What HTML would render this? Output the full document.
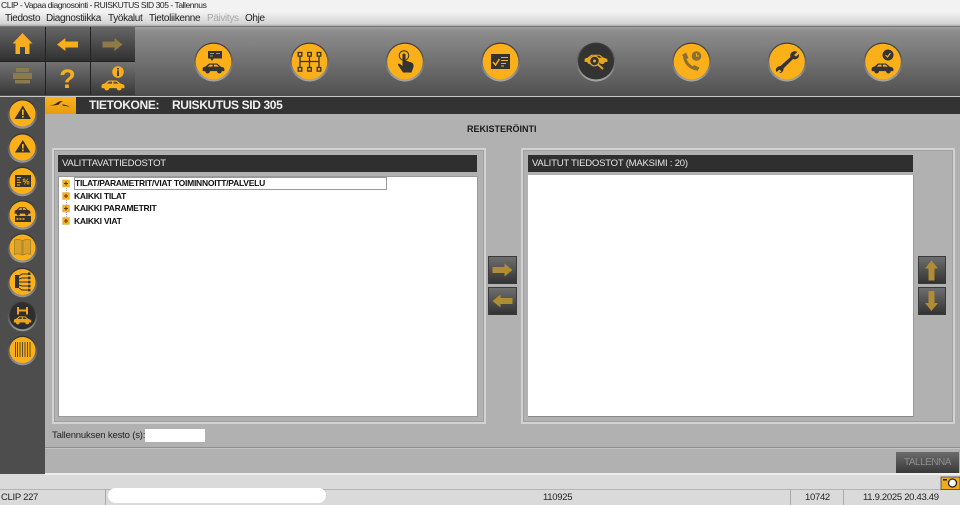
<!DOCTYPE html>
<html><head><meta charset="utf-8"><title>CLIP</title>
<style>
html,body{margin:0;padding:0;width:960px;height:505px;overflow:hidden;background:#dadada}
body{position:relative;font-family:"Liberation Sans",sans-serif}
div{position:absolute;box-sizing:border-box}
.t{white-space:nowrap;line-height:1}
.menu span{position:absolute;top:0;white-space:nowrap}
.btn{background:linear-gradient(#6e6e6e,#333);border:1px solid #3a3a3a}
.hd{background:#2f2f2f;color:#e8e8e8;font-size:9.5px;letter-spacing:-.2px;line-height:17px;padding-left:4px;white-space:nowrap}
.pn{border:2px solid #d2d2d2;outline:1px solid #a0a0a0;outline-offset:-3px}
.it{left:74px;font-size:8.5px;letter-spacing:-.25px;font-weight:bold;color:#111;white-space:nowrap;line-height:10px}
.st{top:492px;font-size:9.5px;letter-spacing:-.3px;color:#222;line-height:11px;white-space:nowrap}
</style></head><body>
<div style="left:0;top:0;width:960px;height:11px;background:#f2f2f2"></div>
<div class="t" style="left:1px;top:0;font-size:8.5px;letter-spacing:-.45px;color:#222;line-height:10px">CLIP - Vapaa diagnosointi - RUISKUTUS SID 305 - Tallennus</div>
<div style="left:0;top:11px;width:960px;height:15px;background:linear-gradient(#f4f4f4,#d4d4d4 85%,#a8a8a8)"></div>
<div class="menu" style="left:0;top:13px;width:960px;height:12px;font-size:10px;letter-spacing:-.35px;line-height:12px;color:#222">
<span style="left:5px">Tiedosto</span><span style="left:46px">Diagnostiikka</span><span style="left:108px">Työkalut</span><span style="left:149px">Tietoliikenne</span><span style="left:207px;color:#aaa">Päivitys</span><span style="left:245px">Ohje</span></div>
<div style="left:0;top:26px;width:960px;height:70px;background:linear-gradient(#a0a0a0 0,#8e8e8e 5%,#505050 100%);border-top:1px solid #777"></div>
<div style="left:0;top:27px;width:135px;height:34px;background:linear-gradient(#666,#303030)"></div>
<div style="left:0;top:62px;width:135px;height:33px;background:linear-gradient(#727272,#383838)"></div>
<div style="left:0;top:61px;width:135px;height:1px;background:#222"></div>
<div style="left:45px;top:27px;width:1px;height:68px;background:#222"></div>
<div style="left:90px;top:27px;width:1px;height:68px;background:#222"></div>
<div style="left:0;top:96px;width:960px;height:1px;background:#c8c8c8"></div>
<div style="left:0;top:97px;width:45px;height:377px;background:#4d4d4d"></div>
<div style="left:45px;top:97px;width:915px;height:17px;background:#333"></div>
<div style="left:45px;top:97px;width:31px;height:17px;background:linear-gradient(#f8b41c,#e89c10)"></div>
<div class="t" style="left:89px;top:98px;font-size:12px;letter-spacing:-.37px;font-weight:bold;color:#f0f0f0;line-height:14px">TIETOKONE:</div>
<div class="t" style="left:172px;top:98px;font-size:12px;letter-spacing:-.37px;font-weight:bold;color:#f0f0f0;line-height:14px">RUISKUTUS SID 305</div>
<div style="left:45px;top:114px;width:915px;height:360px;background:#b1b1b1"></div>
<div class="t" style="left:467px;top:124px;font-size:9px;font-weight:bold;color:#1a1a1a;line-height:10px">REKISTERÖINTI</div>
<div class="pn" style="left:52px;top:148px;width:434px;height:276px"></div>
<div class="pn" style="left:521px;top:148px;width:434px;height:276px"></div>
<div class="hd" style="left:58px;top:155px;width:419px;height:17px">VALITTAVATTIEDOSTOT</div>
<div class="hd" style="left:528px;top:155px;width:385px;height:17px">VALITUT TIEDOSTOT (MAKSIMI : 20)</div>
<div style="left:58px;top:176px;width:420px;height:241px;background:#fff;border:1px solid #999"></div>
<div style="left:528px;top:175px;width:386px;height:242px;background:#fff;border-bottom:1px solid #888;border-right:1px solid #999"></div>
<div style="left:74px;top:177px;width:313px;height:13px;border:1px solid #999"></div>
<div class="it" style="top:178px;left:75px">TILAT/PARAMETRIT/VIAT TOIMINNOITT/PALVELU</div>
<div class="it" style="top:191px">KAIKKI TILAT</div>
<div class="it" style="top:203px">KAIKKI PARAMETRIT</div>
<div class="it" style="top:216px">KAIKKI VIAT</div>
<div class="btn" style="left:488px;top:256px;width:29px;height:28px"></div>
<div class="btn" style="left:488px;top:287px;width:29px;height:28px"></div>
<div class="btn" style="left:918px;top:256px;width:28px;height:28px"></div>
<div class="btn" style="left:918px;top:287px;width:28px;height:28px"></div>
<div class="t" style="left:52px;top:430px;font-size:9.5px;letter-spacing:-.17px;color:#222;line-height:11px">Tallennuksen kesto (s):</div>
<div style="left:145px;top:429px;width:60px;height:13px;background:#fff"></div>
<div style="left:45px;top:447px;width:915px;height:1px;background:#8f8f8f"></div>
<div style="left:45px;top:448px;width:915px;height:1px;background:#c4c4c4"></div>
<div style="left:896px;top:452px;width:63px;height:21px;background:linear-gradient(#6c6c6c,#383838)"></div>
<div class="t" style="left:904px;top:457px;font-size:10px;letter-spacing:-.5px;color:#8e8e8e;line-height:11px">TALLENNA</div>
<div style="left:45px;top:473px;width:915px;height:2px;background:#eee"></div>
<div style="left:0;top:489px;width:960px;height:1px;background:#b4b4b4"></div>
<div style="left:105px;top:489px;width:1px;height:16px;background:#aaa"></div>
<div style="left:790px;top:489px;width:1px;height:16px;background:#aaa"></div>
<div style="left:843px;top:489px;width:1px;height:16px;background:#aaa"></div>
<div style="left:108px;top:488px;width:218px;height:15px;background:#fff;border-radius:8px"></div>
<div class="st" style="left:1px">CLIP 227</div>
<div class="st" style="left:543px">110925</div>
<div class="st" style="left:805px">10742</div>
<div class="st" style="left:863px">11.9.2025 20.43.49</div>

<svg width="960" height="505" viewBox="0 0 960 505" style="position:absolute;left:0;top:0">
<defs>
<linearGradient id="ring" x1="0" y1="0" x2="0" y2="1"><stop offset="0" stop-color="#3c3c3c"/><stop offset=".55" stop-color="#707070"/><stop offset="1" stop-color="#a8a8a8"/></linearGradient>
<linearGradient id="rings" x1="0" y1="0" x2="0" y2="1"><stop offset="0" stop-color="#333"/><stop offset=".6" stop-color="#666"/><stop offset="1" stop-color="#999"/></linearGradient>
<g id="big"><circle r="19.500" cy=".5" fill="url(#ring)"/><circle r="17.800" fill="#fbb01a"/></g>
<g id="bigd"><circle r="19.500" cy=".5" fill="url(#ring)"/><circle r="18" fill="#333"/></g>
<g id="sm"><circle r="14.800" cy=".5" fill="url(#rings)"/><circle r="13" fill="#fbb01a"/></g>
<g id="smd"><circle r="14.800" cy=".5" fill="url(#rings)"/><circle r="13.200" fill="#2e2e2e"/></g>
<g id="car" fill="currentColor">
<path fill-rule="evenodd" d="M-12 3.500 V0.500 Q-12 -1 -9 -1.500 L-5 -5 H4 L8 -1.500 L11 -0.500 Q12.500 0 12 3.500Z M-4 -3.800 L-6.500 -1.500 H-1 V-3.800Z M0.500 -3.800 V-1.500 H6 L3.500 -3.800Z"/>
<circle cx="-6.500" cy="3.500" r="2.600"/><circle cx="6.500" cy="3.500" r="2.600"/>
</g>
<path id="ar" d="M-10 -3 H2 V-6.500 L10 0 L2 6.500 V3 H-10Z"/>
</defs>

<!-- toolbar small icons -->
<path d="M22.500 33 L32.500 43.500 H29.500 V54 H25 V47 H20 V54 H15.500 V43.500 H12.500Z" fill="#f8ae1c"/>
<use href="#ar" transform="translate(67.500 44.500) scale(-1.050,1)" fill="#f8ae1c"/>
<use href="#ar" transform="translate(112.500 44.500) scale(1,1)" fill="#8f7a45"/>
<g fill="#8b7a4c"><rect x="16" y="68" width="13" height="4"/><rect x="13" y="73" width="19" height="6"/><rect x="15" y="80" width="15" height="3.500"/></g>
<text x="67.500" y="88" font-family="Liberation Sans" font-size="27" font-weight="bold" text-anchor="middle" fill="#f8ae1c">?</text>
<use href="#car" transform="translate(113 85) scale(.95,.9)" style="color:#f8ae1c"/>
<circle cx="118" cy="72" r="5.800" fill="#f8ae1c"/><path d="M118 70.500V76M118 68V69.500" stroke="#333" stroke-width="1.800"/>

<!-- top round icons -->
<use href="#big" x="213.500" y="61.500"/>
<rect x="208" y="51" width="14" height="7.500" fill="#333"/><path d="M210 58 h4 l-2 3z" fill="#333"/>
<path d="M210 53.500h4M210 56h3M216 53.500h4" stroke="#fbb01a" stroke-width=".8"/>
<use href="#car" transform="translate(213.500 68) scale(.9)" style="color:#333"/>

<use href="#big" x="309.500" y="61.500"/>
<g fill="#fbb01a" stroke="#333" stroke-width="1.300"><path d="M300 54V69M309.500 54V69M319 54V69M300 61.500H319" fill="none"/><rect x="298.200" y="52.500" width="3.600" height="3.600"/><rect x="307.700" y="52.500" width="3.600" height="3.600"/><rect x="317.200" y="52.500" width="3.600" height="3.600"/><rect x="298.200" y="67.500" width="3.600" height="3.600"/><rect x="307.700" y="67.500" width="3.600" height="3.600"/><rect x="317.200" y="67.500" width="3.600" height="3.600"/></g>

<use href="#big" x="405" y="61.500"/>
<circle cx="404" cy="55.500" r="4.800" fill="none" stroke="#333" stroke-width="1"/>
<path d="M402.500 55 a1.500 1.500 0 0 1 3 0 V60.500 L411.500 62.500 Q414 63.500 413.500 67 L411.500 72.500 H403 L398 65 Q398 63 400 64 L402.500 66Z" fill="#333"/>

<use href="#big" x="500.500" y="61.500"/>
<rect x="491" y="54" width="19" height="15" fill="#333"/>
<path d="M493 62 l2.500 3 l4 -6" fill="none" stroke="#fbb01a" stroke-width="1.500"/>
<path d="M501 57.500h7M501 60.500h7M501 63.500h5M501 66h3" stroke="#fbb01a" stroke-width="1"/>

<use href="#bigd" x="596" y="61.500"/>
<use href="#car" transform="translate(596 59) scale(.95,.85)" style="color:#e9a61c"/>
<circle cx="594.500" cy="61" r="4.800" fill="#333" stroke="#e9a61c" stroke-width="1.200"/>
<path d="M598 64.500 L603 69" stroke="#e9a61c" stroke-width="2"/>
<circle cx="594.500" cy="61" r="1.500" fill="#e9a61c"/>

<use href="#big" x="691.500" y="61.500"/>
<path d="M684.500 56 Q685.500 66 696 69" fill="none" stroke="#8a7030" stroke-width="3"/>
<path d="M682 55 L686 52.500 L688.500 58 L685.500 59.500Z M692 68 L694 65 L699.500 67.500 L697.500 71Z" fill="#8a7030"/>
<circle cx="696.500" cy="56" r="4.800" fill="#8a7030"/><path d="M696.500 53.500V56H699" stroke="#fbb01a" stroke-width="1" fill="none"/>

<use href="#big" x="787" y="61.500"/>
<path d="M797.500 52 A5 5 0 0 0 791 53 A5 5 0 0 0 790.500 57 L780.500 66 A4 4 0 0 0 777.500 67 A3.500 3.500 0 0 0 776.500 72 L779.500 69.500 L781.500 71.500 L779 73 A4 4 0 0 0 783.500 68.500 L793 59 A5 5 0 0 0 798 58 A5 5 0 0 0 799 54 L796 56.500 L794 55Z" fill="#333"/>

<use href="#big" x="883" y="61.500"/>
<circle cx="888" cy="55" r="5.500" fill="#333"/><path d="M885.500 55 l2 2 l3 -4" fill="none" stroke="#fbb01a" stroke-width="1.200"/>
<use href="#car" transform="translate(882.500 68) scale(.9,.9)" style="color:#333"/>

<!-- header logo -->
<path d="M49 104.500 Q55 104 58 101 Q60 99.800 63 100 Q60 101.500 59 103.500 Q56 104.500 49 104.500Z M62 103.500 Q66 103.500 70 106 Q66 105 63 104.800Z" fill="#3a2a10" transform="translate(0 1)"/>

<!-- sidebar -->
<use href="#sm" x="22.500" y="113.500"/>
<path d="M22.800 105.500 L31 119 H14.500Z" fill="#333"/><rect x="22" y="109.500" width="1.700" height="5.500" fill="#fbb01a"/><rect x="22" y="116" width="1.700" height="1.700" fill="#fbb01a"/>
<use href="#sm" x="22.500" y="147.500"/>
<path d="M22.800 140 L30.500 152.500 H15Z" fill="#333"/><rect x="22" y="144" width="1.700" height="4.500" fill="#fbb01a"/><rect x="22" y="149.500" width="1.700" height="1.700" fill="#fbb01a"/>
<use href="#sm" x="22.500" y="181"/>
<rect x="15" y="175" width="16" height="12" fill="#333"/>
<path d="M17 177.500h4M17 180h3M17 182.500h4M17 185h3" stroke="#fbb01a" stroke-width=".9"/>
<text x="26" y="184.500" font-family="Liberation Sans" font-size="8" font-weight="bold" text-anchor="middle" fill="#fbb01a">%</text>
<use href="#sm" x="22.500" y="214.500"/>
<use href="#car" transform="translate(22.500 211) scale(.65,.75)" style="color:#333"/>
<rect x="15" y="216" width="16" height="6" fill="#333"/><path d="M16.500 219h2M19.500 219h2M22.500 219h2" stroke="#fbb01a" stroke-width="1.500"/>
<use href="#sm" x="22.500" y="247.500"/>
<path d="M14.500 240 Q18.500 238.500 22 240.500 V255 Q18.500 253 14.500 254.500Z M23 240.500 Q27 238.500 30.500 240 V254.500 Q27 253 23 255Z" fill="#d8a028" stroke="#a08030" stroke-width=".8"/>
<use href="#sm" x="22.500" y="282"/>
<rect x="15" y="275" width="4" height="13" fill="#333"/>
<path d="M19 276 L22 274 H29 M19 279 L22 278 H29 M19 282 H29 M19 285 L22 286 H29 M19 288 L22 290 H29" fill="none" stroke="#333" stroke-width="1"/>
<g fill="#333"><rect x="28" y="272.500" width="2.500" height="2.500"/><rect x="28" y="276.700" width="2.500" height="2.500"/><rect x="28" y="280.800" width="2.500" height="2.500"/><rect x="28" y="284.800" width="2.500" height="2.500"/><rect x="28" y="288.800" width="2.500" height="2.500"/></g>
<use href="#smd" x="22.500" y="316"/>
<path d="M18 307V314.500M27 307V314.500M18 310.500H27" stroke="#e9a61c" stroke-width="2" fill="none"/>
<use href="#car" transform="translate(22.500 320) scale(.72,.72)" style="color:#e9a61c"/>
<use href="#sm" x="22.500" y="350"/>
<path d="M15.500 342V357M17.500 342V357M20 342V357M22.500 342V357M25 342V357M27.500 342V357M30 342V357" stroke="#5a4820" stroke-width="1"/>

<!-- tree -->
<path d="M66.500 180V221" stroke="#bbb" stroke-dasharray="1 1"/>
<g fill="#f8b020" stroke="#d8b060" stroke-width=".5">
<rect x="62.500" y="180" width="7" height="7"/><rect x="62.500" y="192.500" width="7" height="7"/><rect x="62.500" y="205" width="7" height="7"/><rect x="62.500" y="217.500" width="7" height="7"/></g>
<path d="M64 183.500h4M66 181.500v4M64 196h4M66 194v4M64 208.500h4M66 206.500v4M64 221h4M66 219v4" stroke="#5a3a10" stroke-width="1"/>

<!-- arrow buttons -->
<use href="#ar" transform="translate(502.500 270)" fill="#b08c35"/>
<use href="#ar" transform="translate(502.500 301) scale(-1,1)" fill="#b08c35"/>
<use href="#ar" transform="translate(931.500 270.500) rotate(-90)" fill="#b08c35"/>
<use href="#ar" transform="translate(931.500 301) rotate(90)" fill="#b08c35"/>

<!-- camera -->
<rect x="941" y="477" width="19" height="12.500" fill="#f0ac1c" stroke="#333" stroke-width=".7"/>
<rect x="943" y="479" width="4" height="1.500" fill="#222"/>
<circle cx="952.500" cy="483" r="4" fill="#fff" stroke="#222" stroke-width="1.300"/>
</svg>
</body></html>
